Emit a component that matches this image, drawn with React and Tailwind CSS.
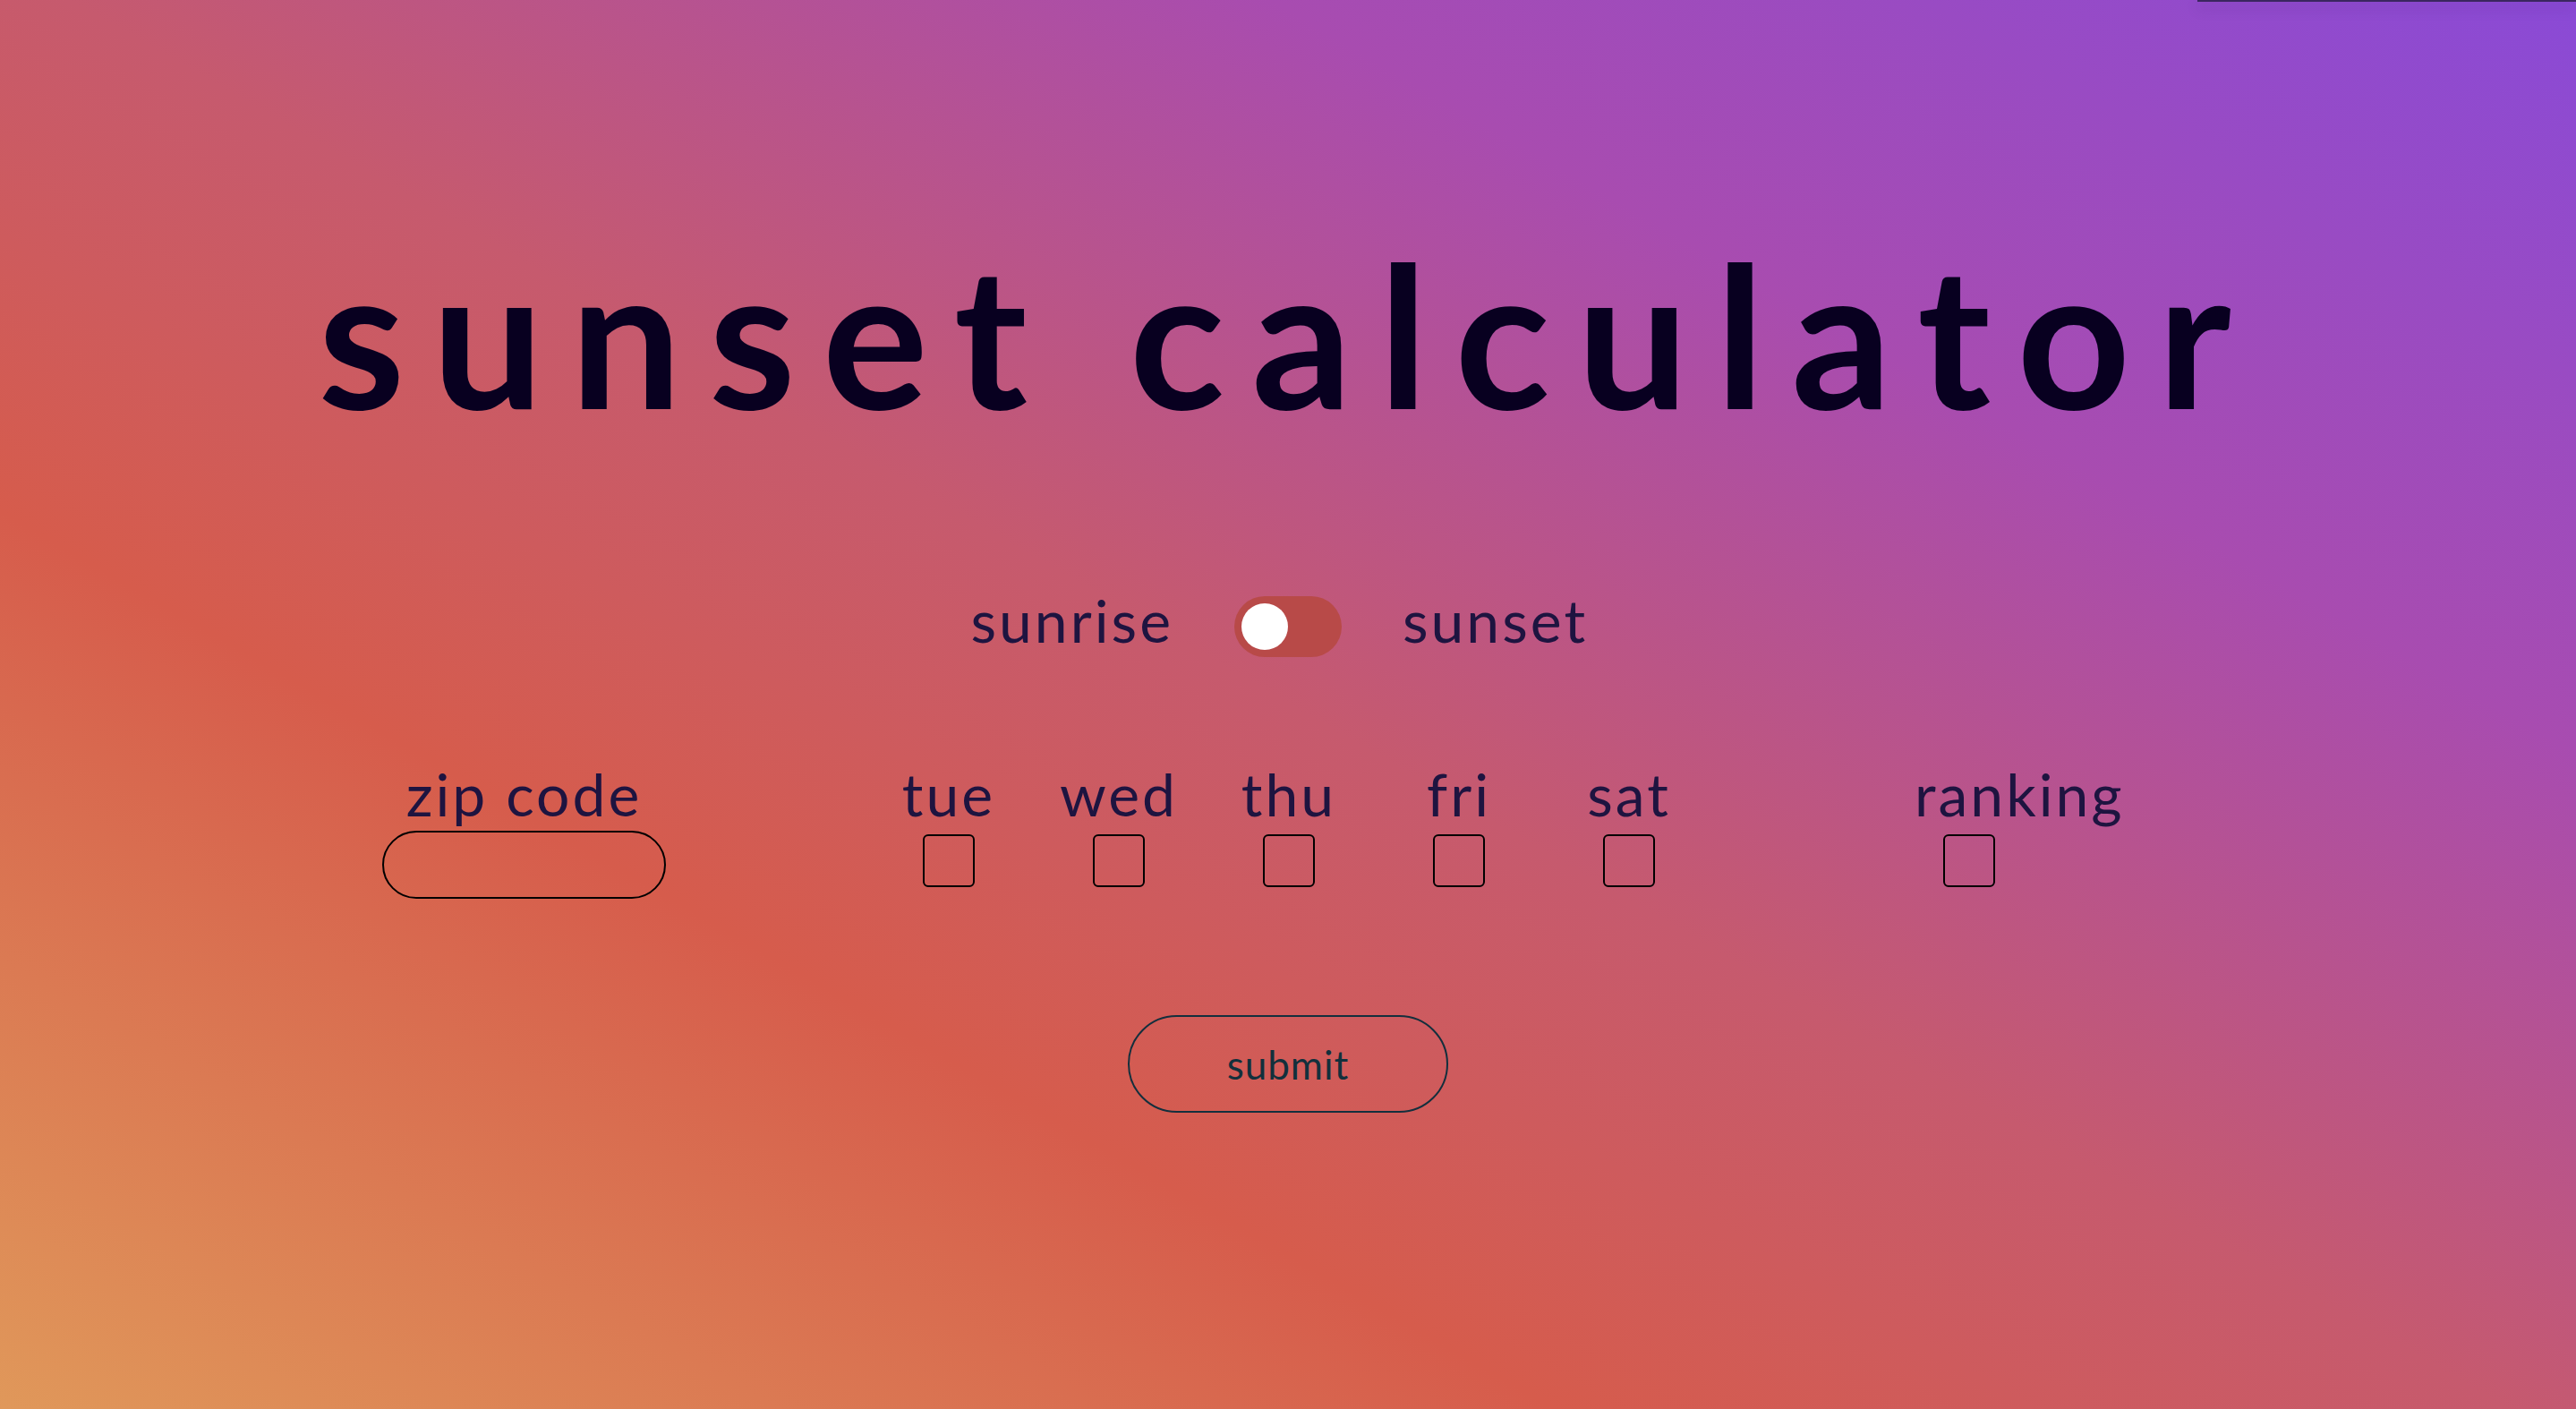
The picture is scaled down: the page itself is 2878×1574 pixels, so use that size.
export default function App() {
  const days = ["tue", "wed", "thu", "fri", "sat"];
  return (
    <div
      className="relative w-full h-[1574px] overflow-hidden bg-[linear-gradient(30deg,#e0985a_0%,#d65c4c_31%,#c65a6e_50%,#a84cb0_74%,#8a4ad6_100%)]"
      style={{ fontFamily: "Lato, 'Noto Sans', sans-serif" }}
    >
      <div className="absolute top-0 right-0 w-[423px] h-[2px] bg-[#3b2660] shadow-[0_6px_14px_rgba(40,0,80,0.35)]" />

      <div className="flex flex-col pt-[261px]">
        <h1 className="text-center text-[221px] leading-none font-bold tracking-[30px] text-[#080020]">
          sunset calculator
        </h1>

        <div className="mt-[178px] grid grid-cols-[1fr_auto_1fr] gap-x-[68px] items-start text-[66px] leading-none text-[#1e1440] tracking-[3px]">
          <span className="justify-self-end">sunrise</span>
          <div className="mt-[6px] w-[120px] h-[68px] rounded-full bg-[#b84a48] flex items-center pl-[8px]">
            <div className="w-[52px] h-[52px] rounded-full bg-white" />
          </div>
          <span className="justify-self-start">sunset</span>
        </div>

        <div className="mt-[120px] flex items-start pl-[427px] text-[66px] leading-none text-[#1e1440] tracking-[3px]">
          <div className="flex flex-col items-center w-[317px]">
            <span>zip code</span>
            <input
              type="text"
              className="mt-[8px] w-[317px] h-[76px] rounded-full border-2 border-black bg-transparent outline-none"
            />
          </div>

          <div className="ml-[221px] flex">
            {days.map((d) => (
              <div key={d} className="w-[190px] flex flex-col items-center">
                <span>{d}</span>
                <div className="mt-[12px] w-[58px] h-[59px] rounded-[6px] border-2 border-black" />
              </div>
            ))}
          </div>

          <div className="ml-[224px] flex flex-col items-start">
            <span>ranking</span>
            <div className="mt-[12px] ml-[32px] w-[58px] h-[59px] rounded-[6px] border-2 border-black" />
          </div>
        </div>

        <div className="mt-[130px] flex justify-center">
          <button className="w-[358px] h-[109px] rounded-full border-2 border-[#132f3d] bg-transparent text-[44px] leading-none text-[#12303c] tracking-[1px]">
            submit
          </button>
        </div>
      </div>
    </div>
  );
}
